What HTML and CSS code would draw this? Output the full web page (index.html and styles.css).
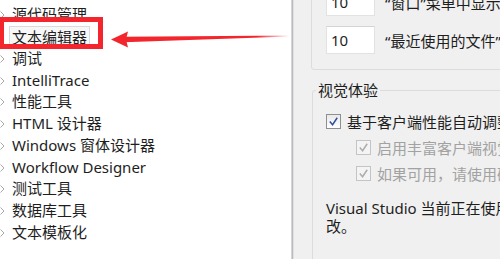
FILE: index.html
```html
<!DOCTYPE html>
<html lang="zh-CN">
<head>
    <meta charset="UTF-8">
    <meta name="viewport" content="width=device-width, initial-scale=1.0">
    <title>选项 - 文本编辑器</title>
    <link rel="stylesheet" href="styles.css">
</head>
<body>

    <!-- Options tree on the left -->
    <div class="tree-pane">
        <ul class="tree">
            <li><svg class="chev" viewBox="0 0 5 8"><polyline points="0.5,0.5 4,4 0.5,7.5"/></svg>Web 窗体设计器</li>
            <li><svg class="chev" viewBox="0 0 5 8"><polyline points="0.5,0.5 4,4 0.5,7.5"/></svg>源代码管理</li>
            <li><span class="selected">文本编辑器</span></li>
            <li><svg class="chev" viewBox="0 0 5 8"><polyline points="0.5,0.5 4,4 0.5,7.5"/></svg>调试</li>
            <li><svg class="chev" viewBox="0 0 5 8"><polyline points="0.5,0.5 4,4 0.5,7.5"/></svg>IntelliTrace</li>
            <li><svg class="chev" viewBox="0 0 5 8"><polyline points="0.5,0.5 4,4 0.5,7.5"/></svg>性能工具</li>
            <li><svg class="chev" viewBox="0 0 5 8"><polyline points="0.5,0.5 4,4 0.5,7.5"/></svg>HTML 设计器</li>
            <li><svg class="chev" viewBox="0 0 5 8"><polyline points="0.5,0.5 4,4 0.5,7.5"/></svg>Windows 窗体设计器</li>
            <li><svg class="chev" viewBox="0 0 5 8"><polyline points="0.5,0.5 4,4 0.5,7.5"/></svg>Workflow Designer</li>
            <li><svg class="chev" viewBox="0 0 5 8"><polyline points="0.5,0.5 4,4 0.5,7.5"/></svg>测试工具</li>
            <li><svg class="chev" viewBox="0 0 5 8"><polyline points="0.5,0.5 4,4 0.5,7.5"/></svg>数据库工具</li>
            <li><svg class="chev" viewBox="0 0 5 8"><polyline points="0.5,0.5 4,4 0.5,7.5"/></svg>文本模板化</li>
        </ul>
    </div>

    <div class="splitter"></div>

    <!-- Settings panel on the right -->
    <div class="settings-pane">
        <div class="group group-top">
            <div class="num-row">
                <div class="num-box">10</div>
                <span>“窗口”菜单中显示的项数</span>
            </div>
            <div class="num-row">
                <div class="num-box">10</div>
                <span>“最近使用的文件”列表中显示的项数</span>
            </div>
        </div>

        <fieldset class="group group-visual">
            <legend>视觉体验</legend>
            <div class="check-row">
                <span class="checkbox"><svg viewBox="0 0 14 14"><polyline points="3,7 6,10.5 11,3"/></svg></span>
                <span>基于客户端性能自动调整视觉体验</span>
            </div>
            <div class="check-row sub disabled">
                <span class="checkbox"><svg viewBox="0 0 14 14"><polyline points="3,7 6,10.5 11,3"/></svg></span>
                <span>启用丰富客户端视觉体验</span>
            </div>
            <div class="check-row sub disabled">
                <span class="checkbox"><svg viewBox="0 0 14 14"><polyline points="3,7 6,10.5 11,3"/></svg></span>
                <span>如果可用，请使用硬件图形加速</span>
            </div>
            <p class="note">Visual Studio 当前正在使用硬件加速的视觉体验。请更<br>改。</p>
        </fieldset>
    </div>

    <!-- Red annotation: box around the item and arrow pointing to it -->
    <div class="mark-box"></div>
    <svg class="mark-arrow" viewBox="0 0 300 60">
        <defs>
            <linearGradient id="fade" x1="0" x2="1" y1="0" y2="0">
                <stop offset="0" stop-color="#f2262c"/>
                <stop offset="0.8" stop-color="#f2262c"/>
                <stop offset="1" stop-color="#f2262c" stop-opacity="0"/>
            </linearGradient>
        </defs>
        <polygon points="111,39.5 128,31.5 126,39.5 128,47.5" fill="#f2262c"/>
        <polygon points="124,36.8 290,35.6 290,36.4 124,42.2" fill="url(#fade)"/>
    </svg>

</body>
</html>
```

FILE: styles.css
```css
body {
    margin: 0;
    width: 500px;
    height: 259px;
    display: flex;
    overflow: hidden;
    position: relative;
    font-family: "Noto Sans", "Noto Sans CJK SC", sans-serif;
    font-size: 15px;
    color: #1e1e1e;
    background: #ffffff;
}

/* Tree on the left */
.tree-pane {
    width: 291px;
    flex-shrink: 0;
    background: #ffffff;
    overflow: hidden;
}

.tree {
    list-style: none;
    margin: -17.7px 0 0 0;
    padding: 0;
}

.tree li {
    height: 21.8px;
    line-height: 21.8px;
    padding-left: 12px;
    position: relative;
    white-space: nowrap;
}

.chev {
    position: absolute;
    left: 0;
    top: 7px;
    width: 5px;
    height: 8px;
    fill: none;
    stroke: #a8a8a8;
    stroke-width: 1;
}

.selected {
    display: inline-block;
    margin-left: -3px;
    padding: 0 2px;
    line-height: 20px;
    border: 1px solid #dadada;
    background: #f7f7f7;
}

.splitter {
    width: 1px;
    flex-shrink: 0;
    background: #b9b9be;
    border-left: 1px solid #d6d6da;
    border-right: 1px solid #e2e2e5;
}

/* Settings on the right */
.settings-pane {
    flex: 1;
    background: #f0f0f0;
    overflow: hidden;
    padding-left: 17px;
}

.group {
    width: 260px;
    border: 1px solid #dcdcdc;
    border-radius: 3px;
}

.group-top {
    margin-top: -23px;
    padding: 10px 14px 15px 14px;
    display: flex;
    flex-direction: column;
    gap: 10px;
}

.num-row {
    display: flex;
    align-items: center;
    gap: 10px;
    white-space: nowrap;
}

.num-box {
    width: 43px;
    height: 26px;
    flex-shrink: 0;
    line-height: 26px;
    padding-left: 4px;
    background: #ffffff;
    border: 1px solid #e2e2e2;
    border-top-color: #d4d4d4;
}

.group-visual {
    margin: 11px 0 0 1px;
    padding: 9px 0 40px 13px;
    min-width: 0;
    border-bottom: none;
}

.group-visual legend {
    margin-left: -10px;
    padding: 0 2px;
    line-height: 18px;
}

.check-row {
    height: 26px;
    display: flex;
    align-items: center;
    gap: 6px;
    white-space: nowrap;
}

.check-row.sub {
    padding-left: 30px;
}

.checkbox {
    width: 13px;
    height: 13px;
    flex-shrink: 0;
    border: 1px solid #8e8f8f;
    background: linear-gradient(#e9e9e9, #ffffff);
}

.checkbox svg {
    display: block;
    width: 13px;
    height: 13px;
    fill: none;
    stroke: #2d4f9e;
    stroke-width: 1.6;
}

.disabled {
    color: #a2a2a2;
}

.disabled .checkbox {
    border-color: #c4c4c4;
    background: #f4f4f4;
}

.disabled .checkbox svg {
    stroke: #acacac;
}

.note {
    margin: 13px 0 0 0;
    line-height: 18px;
    white-space: nowrap;
}

/* Annotation overlay */
.mark-box {
    position: absolute;
    left: -1px;
    top: 17px;
    width: 94px;
    height: 22px;
    border: 5px solid #f2262c;
}

.mark-arrow {
    position: absolute;
    left: 0;
    top: 0;
    width: 300px;
    height: 60px;
}
```
